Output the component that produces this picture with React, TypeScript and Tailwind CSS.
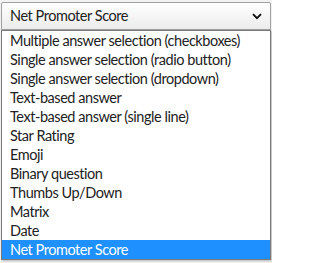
const options = [
  "Multiple answer selection (checkboxes)",
  "Single answer selection (radio button)",
  "Single answer selection (dropdown)",
  "Text-based answer",
  "Text-based answer (single line)",
  "Star Rating",
  "Emoji",
  "Binary question",
  "Thumbs Up/Down",
  "Matrix",
  "Date",
  "Net Promoter Score",
];

export default function App() {
  const selected = "Net Promoter Score";

  return (
    <div
      className="w-[272px] h-[263px] bg-[#f2f2f2] overflow-hidden pt-[2px] pl-[1px]"
      style={{ fontFamily: "Lato, 'Noto Sans', sans-serif" }}
    >
      {/* Closed select */}
      <div className="w-[270px] h-[28px] border border-[#a0a0a0] rounded-t-[2px] bg-gradient-to-b from-white to-[#ececec] flex items-center justify-between pl-[8px] pr-[7px] text-[14.5px] tracking-[-0.45px] text-[#222]">
        <span>{selected}</span>
        <svg width="10" height="7" viewBox="0 0 10 7" className="mr-[1px]">
          <path d="M1 1.2 L5 5.2 L9 1.2" fill="none" stroke="#111" strokeWidth="1.9" />
        </svg>
      </div>

      {/* Open list */}
      <div className="w-[270px] bg-white border border-[#7a7a7a] shadow-[1px_1px_2px_rgba(0,0,0,0.25)]">
        {options.map((opt) => (
          <div
            key={opt}
            className={`h-[19px] leading-[19px] pl-[8px] text-[14.5px] tracking-[-0.45px] whitespace-nowrap ${
              opt === selected ? "bg-[#1e90ff] text-white" : "text-[#222]"
            }`}
          >
            {opt}
          </div>
        ))}
      </div>
    </div>
  );
}
